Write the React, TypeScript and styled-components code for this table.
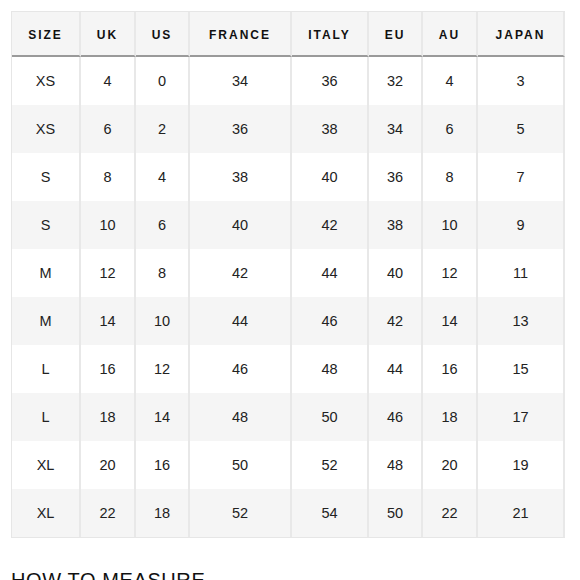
import React from 'react';
import styled, { createGlobalStyle } from 'styled-components';

const columns = [
    { label: 'SIZE', width: 69 },
    { label: 'UK', width: 55 },
    { label: 'US', width: 54 },
    { label: 'FRANCE', width: 102 },
    { label: 'ITALY', width: 77 },
    { label: 'EU', width: 54 },
    { label: 'AU', width: 55 },
    { label: 'JAPAN', width: 87 },
];

const rows: (string | number)[][] = [
    ['XS', 4, 0, 34, 36, 32, 4, 3],
    ['XS', 6, 2, 36, 38, 34, 6, 5],
    ['S', 8, 4, 38, 40, 36, 8, 7],
    ['S', 10, 6, 40, 42, 38, 10, 9],
    ['M', 12, 8, 42, 44, 40, 12, 11],
    ['M', 14, 10, 44, 46, 42, 14, 13],
    ['L', 16, 12, 46, 48, 44, 16, 15],
    ['L', 18, 14, 48, 50, 46, 18, 17],
    ['XL', 20, 16, 50, 52, 48, 20, 19],
    ['XL', 22, 18, 52, 54, 50, 22, 21],
];

export default function App() {
    return (
        <>
        <GlobalStyle />
        <Page>
            <SizeTable>
                <colgroup>
                    {columns.map((c) => (
                        <col key={c.label} style={{ width: c.width }} />
                    ))}
                </colgroup>
                <thead>
                    <tr>
                        {columns.map((c) => (
                            <HeadCell key={c.label}>{c.label}</HeadCell>
                        ))}
                    </tr>
                </thead>
                <tbody>
                    {rows.map((r, i) => (
                        <Row key={i} $striped={i % 2 === 1}>
                            {r.map((v, j) => (
                                <Cell key={j}>{v}</Cell>
                            ))}
                        </Row>
                    ))}
                </tbody>
            </SizeTable>
            <Heading>How to measure</Heading>
        </Page>
        </>
    );
}

const GlobalStyle = createGlobalStyle`
    body {
        margin: 0;
        background: #fff;
        font-family: "Liberation Sans", Arial, sans-serif;
        color: #222;
    }
`;

const Page = styled.div`
    padding: 11px 0 0 11px;
    height: 580px;
    overflow: hidden;
    box-sizing: border-box;
`;

const SizeTable = styled.table`
    width: 553px;
    table-layout: fixed;
    border-collapse: separate;
    border-spacing: 0;
    border: 1px solid #e6e6e6;
    border-right: none;
`;

const HeadCell = styled.th`
    height: 45px;
    padding: 3px 0 0;
    background: #f5f5f5;
    border-bottom: 2px solid #9a9a9a;
    border-right: 2px solid #e8e8e8;
    font-size: 12px;
    font-weight: 700;
    letter-spacing: 2px;
    color: #111;
    text-align: center;
    box-sizing: border-box;
`;

const Row = styled.tr<{ $striped: boolean }>`
    background: ${({ $striped }) => ($striped ? '#f5f5f5' : '#fff')};
`;

const Cell = styled.td`
    height: 48px;
    padding: 0;
    border-right: 2px solid #e8e8e8;
    font-size: 14.5px;
    color: #222;
    text-align: center;
    box-sizing: border-box;
`;

const Heading = styled.h2`
    margin: 30px 0 0;
    font-size: 20px;
    line-height: 24px;
    font-weight: 400;
    letter-spacing: 0.6px;
    text-transform: uppercase;
    color: #111;
`;
